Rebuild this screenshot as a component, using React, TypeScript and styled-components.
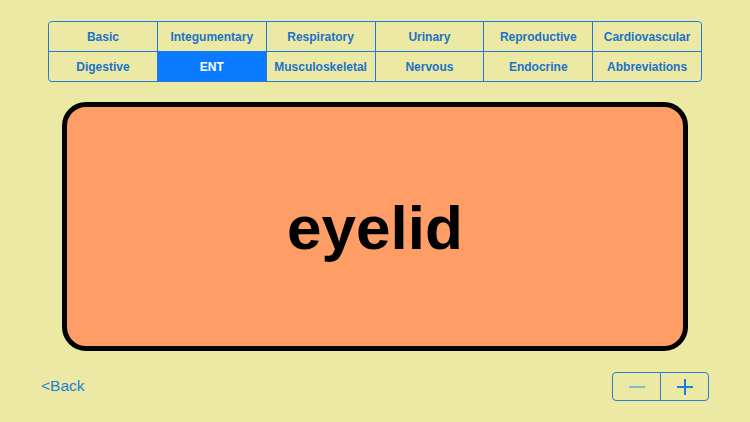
import styled, { createGlobalStyle } from "styled-components";

const GlobalStyle = createGlobalStyle`
  html, body {
    margin: 0;
    padding: 0;
    background: #ebe9a3;
  }
  body {
    font-family: "Liberation Sans", Arial, sans-serif;
  }
`;

const Screen = styled.div`
  width: 750px;
  height: 422px;
  box-sizing: border-box;
  display: flex;
  flex-direction: column;
  align-items: center;
  padding-top: 21px;
  background: #ebe9a3;
`;

const Segments = styled.div`
  width: 652px;
  display: grid;
  grid-template-columns: repeat(6, 1fr);
  grid-auto-rows: 29px;
  border: 1px solid #1e7bd6;
  border-radius: 4px;
  overflow: hidden;
  gap: 1px;
  background: #1e7bd6;
`;

const Segment = styled.div<{ $active?: boolean }>`
  display: flex;
  align-items: center;
  justify-content: center;
  font-size: 12px;
  font-weight: bold;
  color: ${(p) => (p.$active ? "#ffffff" : "#1d72c9")};
  background: ${(p) => (p.$active ? "#0a7aff" : "#ebe9a3")};
`;

const Card = styled.div`
  margin-top: 20px;
  width: 626px;
  height: 249px;
  box-sizing: border-box;
  border: 5px solid #000;
  border-radius: 24px;
  background: #fe9e66;
  display: flex;
  align-items: center;
  justify-content: center;
`;

const Word = styled.span`
  font-size: 62px;
  font-weight: bold;
  color: #000;
  margin-top: 2px;
`;

const Footer = styled.div`
  width: 100%;
  box-sizing: border-box;
  display: flex;
  justify-content: space-between;
  align-items: center;
  padding: 21px 41px 0 41px;
`;

const BackLink = styled.span`
  color: #1d7fd8;
  font-size: 15.5px;
  margin-bottom: 2px;
`;

const Stepper = styled.div`
  display: flex;
  border: 1px solid #2a80cf;
  border-radius: 4px;
  overflow: hidden;
`;

const StepButton = styled.div<{ $disabled?: boolean }>`
  width: 47px;
  height: 27px;
  display: flex;
  align-items: center;
  justify-content: center;
  color: ${(p) => (p.$disabled ? "#86b8c6" : "#1a7ee0")};
  & + & {
    border-left: 1px solid #2a80cf;
  }
`;

const rows = [
  ["Basic", "Integumentary", "Respiratory", "Urinary", "Reproductive", "Cardiovascular"],
  ["Digestive", "ENT", "Musculoskeletal", "Nervous", "Endocrine", "Abbreviations"],
];

export default function App() {
  return (
    <>
      <GlobalStyle />
      <Screen>
        <Segments>
          {rows.flat().map((label) => (
            <Segment key={label} $active={label === "ENT"}>
              {label}
            </Segment>
          ))}
        </Segments>
        <Card>
          <Word>eyelid</Word>
        </Card>
        <Footer>
          <BackLink>&lt;Back</BackLink>
          <Stepper>
            <StepButton $disabled>
              <svg width="16" height="16" viewBox="0 0 16 16">
                <path d="M0 8h16" stroke="currentColor" strokeWidth="2" />
              </svg>
            </StepButton>
            <StepButton>
              <svg width="16" height="16" viewBox="0 0 16 16">
                <path d="M0 8h16M8 0v16" stroke="currentColor" strokeWidth="2" />
              </svg>
            </StepButton>
          </Stepper>
        </Footer>
      </Screen>
    </>
  );
}
